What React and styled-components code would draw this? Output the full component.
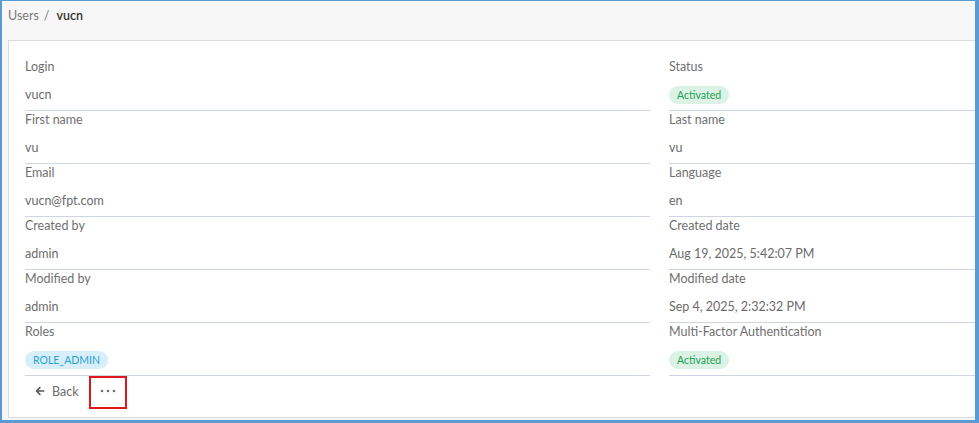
import React from 'react';
import styled, { createGlobalStyle } from 'styled-components';
import { FaArrowLeft } from 'react-icons/fa';

const GlobalStyle = createGlobalStyle`
  html, body {
    margin: 0;
    padding: 0;
    background: #ffffff;
  }
  body {
    font-family: Lato, "Noto Sans", sans-serif;
    font-size: 12.5px;
    color: #6b6b6b;
  }
`

const Frame = styled.div`
  width: 979px;
  height: 423px;
  box-sizing: border-box;
  border-style: solid;
  border-color: #5b9bd5;
  border-width: 1px 4px 3px 2px;
  background: #f7f7f7;
  overflow: hidden;
`

const Breadcrumb = styled.nav`
  display: flex;
  align-items: center;
  gap: 5px;
  height: 39px;
  box-sizing: border-box;
  padding: 0 0 10px 6px;
  color: #7a7a7a;
`

const Crumb = styled.span`
  color: ${p => (p.$active ? '#333' : '#7a7a7a')};
  font-weight: ${p => (p.$active ? 600 : 400)};
  margin-left: ${p => (p.$active ? '2px' : '0')};
`

const Card = styled.section`
  width: 1320px;
  margin-left: 6px;
  height: 378px;
  box-sizing: border-box;
  background: #fff;
  border: 1px solid #dcdcdc;
  padding: 17px 16px 0 16px;
`

const Columns = styled.div`
  display: grid;
  grid-template-columns: 625px 625px;
  column-gap: 19px;
  align-items: start;
`

const Column = styled.div`
  display: flex;
  flex-direction: column;
`

const Field = styled.div`
  display: flex;
  flex-direction: column;
  gap: 10px;
  padding: 0 0 6px;
  border-bottom: 1px solid #cfd4e2;
`

const Label = styled.div`
  line-height: 18px;
  color: #707070;
`

const Value = styled.div`
  line-height: 18px;
  min-height: 18px;
  color: #6b6b6b;
`

const Badge = styled.span`
  display: inline-block;
  padding: 0 8px;
  height: 18px;
  line-height: 18px;
  border-radius: 9px;
  font-size: 10.5px;
  background: ${p => (p.$tone === 'blue' ? '#d8eff9' : '#dbf2e4')};
  color: ${p => (p.$tone === 'blue' ? '#2a9fd8' : '#22a052')};
`

const Footer = styled.div`
  display: flex;
  align-items: flex-start;
  gap: 10px;
  height: 34px;
`

const BackButton = styled.button`
  display: flex;
  align-items: center;
  gap: 7px;
  height: 30px;
  border: none;
  background: none;
  padding: 0 0 0 10px;
  font-family: inherit;
  font-size: 12.5px;
  color: #6b6b6b;
  cursor: pointer;
  svg {
    color: #555;
  }
`

const MoreButton = styled.button`
  display: flex;
  align-items: center;
  justify-content: center;
  width: 38px;
  height: 33px;
  box-sizing: border-box;
  border: 2px solid #e0161e;
  background: none;
  padding: 0 0 3px;
  color: #6f6f6f;
  cursor: pointer;
`

const DotsIcon = () => (
  <svg width="16" height="4" viewBox="0 0 16 4" fill="currentColor">
    <circle cx="2" cy="2" r="1.3" />
    <circle cx="8" cy="2" r="1.3" />
    <circle cx="14" cy="2" r="1.3" />
  </svg>
);

const left = [
  ['Login', 'vucn'],
  ['First name', 'vu'],
  ['Email', 'vucn@fpt.com'],
  ['Created by', 'admin'],
  ['Modified by', 'admin'],
  ['Roles', <Badge $tone="blue">ROLE_ADMIN</Badge>],
];

const right = [
  ['Status', <Badge>Activated</Badge>],
  ['Last name', 'vu'],
  ['Language', 'en'],
  ['Created date', 'Aug 19, 2025, 5:42:07 PM'],
  ['Modified date', 'Sep 4, 2025, 2:32:32 PM'],
  ['Multi-Factor Authentication', <Badge>Activated</Badge>],
];

const FieldList = ({ items }) => (
  <Column>
    {items.map(([label, value]) => (
      <Field key={label}>
        <Label>{label}</Label>
        <Value>{value}</Value>
      </Field>
    ))}
  </Column>
);

export default function App() {
  return (
    <>
      <GlobalStyle />
      <Frame>
        <Breadcrumb>
          <Crumb>Users</Crumb>
          <span>/</span>
          <Crumb $active>vucn</Crumb>
        </Breadcrumb>
        <Card>
          <Columns>
            <FieldList items={left} />
            <FieldList items={right} />
          </Columns>
          <Footer>
            <BackButton>
              <FaArrowLeft size={10} />
              Back
            </BackButton>
            <MoreButton>
              <DotsIcon />
            </MoreButton>
          </Footer>
        </Card>
      </Frame>
    </>
  );
}
